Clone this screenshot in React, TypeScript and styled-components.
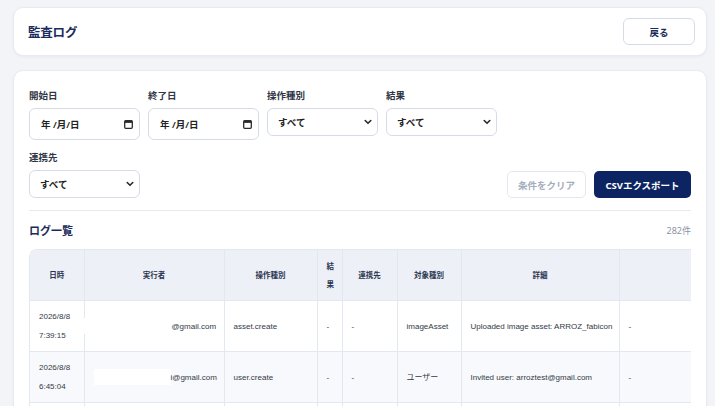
import { FC } from 'react';
import styled, { createGlobalStyle } from 'styled-components';

const GlobalStyle = createGlobalStyle`
  body {
    margin: 0;
    background: #f2f4f8;
    font-family: 'Noto Sans', 'Noto Sans CJK JP', sans-serif;
    color: #2b3344;
  }
`;

const columns = [
  { label: '日時', width: 54 },
  { label: '実行者', width: 140 },
  { label: '操作種別', width: 93 },
  { label: '結果', width: 25 },
  { label: '連携先', width: 55 },
  { label: '対象種別', width: 64 },
  { label: '詳細', width: 158 },
  { label: 'IP', width: 200 },
];

interface LogRow {
  date: string;
  time: string;
  redact: { width: number; shift: number };
  email: string;
  action: string;
  result: string;
  partner: string;
  target: string;
  detail: string;
  ip: string;
}

const rows: LogRow[] = [
  {
    date: '2026/8/8',
    time: '7:39:15',
    redact: { width: 88, shift: -10 },
    email: '@gmail.com',
    action: 'asset.create',
    result: '-',
    partner: '-',
    target: 'imageAsset',
    detail: 'Uploaded image asset: ARROZ_fabicon',
    ip: '-',
  },
  {
    date: '2026/8/8',
    time: '6:45:04',
    redact: { width: 77, shift: 0 },
    email: 'i@gmail.com',
    action: 'user.create',
    result: '-',
    partner: '-',
    target: 'ユーザー',
    detail: 'Invited user: arroztest@gmail.com',
    ip: '-',
  },
  {
    date: '2026/8/8',
    time: '6:40:22',
    redact: { width: 80, shift: 0 },
    email: '@gmail.com',
    action: 'auth.login',
    result: '-',
    partner: '-',
    target: 'セッション',
    detail: 'Signed in',
    ip: '-',
  },
];

const CalendarIcon: FC = () => (
  <svg width="9" height="9" viewBox="0 0 9 9" fill="none">
    <rect x="0.7" y="0.7" width="7.6" height="7.6" rx="1" stroke="#2b2b2b" strokeWidth="1.3" />
    <rect x="0.7" y="0.7" width="7.6" height="2.2" fill="#2b2b2b" />
  </svg>
);

const Chevron: FC = () => (
  <svg width="8" height="6" viewBox="0 0 8 6" fill="none">
    <path d="M1.2 1.5 L4 4.3 L6.8 1.5" stroke="#2b2b2b" strokeWidth="1.6" strokeLinecap="round" strokeLinejoin="round" />
  </svg>
);

const SelectField: FC<{ label: string }> = ({ label }) => (
  <Field>
    <Label>{label}</Label>
    <SelectWrap>
      <Select defaultValue="all">
        <option value="all">すべて</option>
      </Select>
      <ChevronSlot>
        <Chevron />
      </ChevronSlot>
    </SelectWrap>
  </Field>
);

const DateField: FC<{ label: string }> = ({ label }) => (
  <Field>
    <Label>{label}</Label>
    <DateBox>
      <span>年 /月/日</span>
      <CalendarIcon />
    </DateBox>
  </Field>
);

export default function App() {
  return (
    <>
      <GlobalStyle />
      <Page>
        <HeaderCard>
          <Title>監査ログ</Title>
          <BackButton type="button">戻る</BackButton>
        </HeaderCard>

        <Card>
          <FilterRow>
            <DateField label="開始日" />
            <DateField label="終了日" />
            <SelectField label="操作種別" />
            <SelectField label="結果" />
          </FilterRow>
          <ActionRow>
            <SelectField label="連携先" />
            <Buttons>
              <ClearButton type="button" disabled>
                条件をクリア
              </ClearButton>
              <ExportButton type="button">CSVエクスポート</ExportButton>
            </Buttons>
          </ActionRow>

          <Divider />

          <ListHeader>
            <SectionTitle>ログ一覧</SectionTitle>
            <Count>282件</Count>
          </ListHeader>

          <TableWrap>
            <Table>
              <colgroup>
                {columns.map((c) => (
                  <col key={c.label} style={{ width: c.width }} />
                ))}
              </colgroup>
              <thead>
                <tr>
                  {columns.map((c) => (
                    <Th key={c.label}>{c.label}</Th>
                  ))}
                </tr>
              </thead>
              <tbody>
                {rows.map((r, i) => (
                  <Tr key={i} $striped={i % 2 === 1}>
                    <Td>
                      <Line>{r.date}</Line>
                      <Line>{r.time}</Line>
                    </Td>
                    <Td>
                      <Redact $width={r.redact.width} $shift={r.redact.shift} />
                      {r.email}
                    </Td>
                    <Td>{r.action}</Td>
                    <Td>{r.result}</Td>
                    <Td>{r.partner}</Td>
                    <Td>{r.target}</Td>
                    <Td>{r.detail}</Td>
                    <Td>{r.ip}</Td>
                  </Tr>
                ))}
              </tbody>
            </Table>
          </TableWrap>
        </Card>
      </Page>
    </>
  );
}

const Page = styled.div`
  display: flex;
  flex-direction: column;
  gap: 14px;
  padding: 7px 8px 0 13px;
`;

const HeaderCard = styled.header`
  display: flex;
  align-items: center;
  justify-content: space-between;
  height: 49px;
  box-sizing: border-box;
  padding: 0 11px 0 14px;
  background: #fff;
  border: 1px solid #e7eaf1;
  border-radius: 10px;
  box-shadow: 0 1px 3px rgba(30, 45, 80, 0.05);
`;

const Title = styled.h1`
  margin: 0;
  font-size: 12.5px;
  font-weight: 700;
  color: #1b2b5c;
  letter-spacing: -0.2px;
`;

const BackButton = styled.button`
  width: 72px;
  height: 27px;
  background: #fff;
  border: 1px solid #d4dbe8;
  border-radius: 6px;
  font-family: inherit;
  font-size: 9.5px;
  font-weight: 700;
  color: #1b2b5c;
`;

const Card = styled.section`
  background: #fff;
  border: 1px solid #e7eaf1;
  border-radius: 10px;
  padding: 18px 15px 0 15px;
  box-shadow: 0 1px 3px rgba(30, 45, 80, 0.05);
  height: 420px;
  overflow: hidden;
`;

const FilterRow = styled.div`
  display: flex;
  gap: 8.5px;
`;

const ActionRow = styled.div`
  display: flex;
  align-items: flex-end;
  justify-content: space-between;
  margin-top: 11px;
`;

const Field = styled.div`
  display: flex;
  flex-direction: column;
  gap: 5px;
  width: 110.5px;
`;

const Label = styled.label`
  font-size: 9.5px;
  line-height: 14px;
  font-weight: 700;
  color: #2f3646;
`;

const DateBox = styled.div`
  display: flex;
  align-items: center;
  justify-content: space-between;
  height: 32px;
  box-sizing: border-box;
  padding: 0 6px 0 11px;
  border: 1px solid #d6dce7;
  border-radius: 6px;
  font-size: 9.5px;
  font-weight: 600;
  color: #222;
`;

const SelectWrap = styled.div`
  position: relative;
  height: 28px;
`;

const Select = styled.select`
  appearance: none;
  width: 100%;
  height: 100%;
  padding: 0 20px 0 10px;
  border: 1px solid #d6dce7;
  border-radius: 6px;
  background: #fff;
  font-family: inherit;
  font-size: 9.5px;
  font-weight: 600;
  color: #222;
  outline: none;
`;

const ChevronSlot = styled.span`
  position: absolute;
  right: 6px;
  top: 50%;
  transform: translateY(-50%);
  display: flex;
  pointer-events: none;
`;

const Buttons = styled.div`
  display: flex;
  gap: 8px;
`;

const ClearButton = styled.button`
  width: 79px;
  height: 27px;
  background: #fff;
  border: 1px solid #e3e7ef;
  border-radius: 5px;
  font-family: inherit;
  font-size: 9.5px;
  font-weight: 700;
  color: #a4adbd;
`;

const ExportButton = styled.button`
  width: 97px;
  height: 27px;
  background: #0c2461;
  border: none;
  border-radius: 5px;
  font-family: inherit;
  font-size: 9.5px;
  font-weight: 700;
  color: #fff;
`;

const Divider = styled.hr`
  margin: 12px 0 0;
  border: none;
  border-top: 1px solid #e6e9f0;
`;

const ListHeader = styled.div`
  display: flex;
  align-items: center;
  justify-content: space-between;
  height: 38px;
`;

const SectionTitle = styled.h2`
  margin: 0;
  font-size: 11px;
  font-weight: 700;
  color: #1b2b5c;
`;

const Count = styled.span`
  font-size: 9px;
  color: #8b93a3;
`;

const TableWrap = styled.div`
  overflow: hidden;
  border-top-left-radius: 8px;
  border: 1px solid #e3e7ef;
  border-right: none;
`;

const Table = styled.table`
  border-collapse: collapse;
  table-layout: fixed;
  width: 789px;
  font-family: 'Liberation Sans', 'Noto Sans CJK JP', sans-serif;
  font-size: 8px;
`;

const Th = styled.th`
  height: 50px;
  padding: 0 9px;
  background: #edf0f7;
  border-left: 1px solid #e3e7ef;
  font-family: 'Noto Sans', 'Noto Sans CJK JP', sans-serif;
  font-size: 7.5px;
  font-weight: 700;
  line-height: 18px;
  color: #2a3550;
  text-align: center;
  vertical-align: middle;
  overflow: hidden;

  &:first-child {
    border-left: none;
  }
`;

const Tr = styled.tr<{ $striped: boolean }>`
  background: ${({ $striped }) => ($striped ? '#f8f9fc' : '#fff')};
`;

const Td = styled.td`
  height: 50px;
  padding: 0 9px;
  border-top: 1px solid #e3e7ef;
  border-left: 1px solid #e3e7ef;
  line-height: 19px;
  color: #333a46;
  white-space: nowrap;
  vertical-align: middle;

  &:first-child {
    border-left: none;
  }
`;

const Line = styled.span`
  display: block;
`;

const Redact = styled.span<{ $width: number; $shift: number }>`
  display: inline-block;
  vertical-align: middle;
  width: ${({ $width }) => $width}px;
  height: 16px;
  margin-left: ${({ $shift }) => $shift}px;
  background: #fff;
`;
